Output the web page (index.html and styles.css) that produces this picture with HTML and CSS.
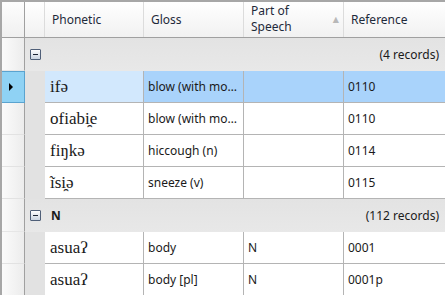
FILE: index.html
```html
<!DOCTYPE html>
<html lang="en">
<head>
  <meta charset="UTF-8">
  <title>Lexicon grid</title>
  <link rel="stylesheet" href="styles.css">
</head>
<body>
  <div class="grid">
    <!-- Column headers -->
    <div class="head">
      <div class="rh"></div>
      <div class="indent"></div>
      <div class="hcell c-phon">Phonetic</div>
      <div class="hcell c-gloss">Gloss</div>
      <div class="hcell c-pos"><span class="two-line">Part of<br>Speech</span><span class="sort">▲</span></div>
      <div class="hcell c-ref">Reference</div>
    </div>

    <!-- Group: empty part of speech -->
    <div class="group">
      <div class="rh"></div>
      <div class="group-body">
        <span class="toggle"></span>
        <span class="group-name"></span>
        <span class="count">(4 records)</span>
      </div>
    </div>
    <div class="row selected">
      <div class="rh"><span class="pointer"></span></div>
      <div class="indent"></div>
      <div class="cell c-phon phon">ifə</div>
      <div class="cell c-gloss">blow (with mo…</div>
      <div class="cell c-pos"></div>
      <div class="cell c-ref">0110</div>
    </div>
    <div class="row">
      <div class="rh"></div>
      <div class="indent"></div>
      <div class="cell c-phon phon">ofiabi̯e</div>
      <div class="cell c-gloss">blow (with mo…</div>
      <div class="cell c-pos"></div>
      <div class="cell c-ref">0110</div>
    </div>
    <div class="row">
      <div class="rh"></div>
      <div class="indent"></div>
      <div class="cell c-phon phon">fiŋkə</div>
      <div class="cell c-gloss">hiccough (n)</div>
      <div class="cell c-pos"></div>
      <div class="cell c-ref">0114</div>
    </div>
    <div class="row">
      <div class="rh"></div>
      <div class="indent"></div>
      <div class="cell c-phon phon">ĩsi̯ə</div>
      <div class="cell c-gloss">sneeze (v)</div>
      <div class="cell c-pos"></div>
      <div class="cell c-ref">0115</div>
    </div>

    <!-- Group: N -->
    <div class="group">
      <div class="rh"></div>
      <div class="group-body">
        <span class="toggle"></span>
        <span class="group-name">N</span>
        <span class="count">(112 records)</span>
      </div>
    </div>
    <div class="row">
      <div class="rh"></div>
      <div class="indent"></div>
      <div class="cell c-phon phon">asuaʔ</div>
      <div class="cell c-gloss">body</div>
      <div class="cell c-pos">N</div>
      <div class="cell c-ref">0001</div>
    </div>
    <div class="row">
      <div class="rh"></div>
      <div class="indent"></div>
      <div class="cell c-phon phon">asuaʔ</div>
      <div class="cell c-gloss">body [pl]</div>
      <div class="cell c-pos">N</div>
      <div class="cell c-ref">0001p</div>
    </div>
  </div>
</body>
</html>
```

FILE: styles.css
```css
/* Base */
body {
  margin: 0;
  font-family: "Noto Sans", "DejaVu Sans", sans-serif;
  font-size: 12px;
  color: #1a1a1a;
  background: #fff;
}

.grid {
  width: 445px;
  height: 295px;
  box-sizing: border-box;
  border-top: 2px solid #a7a7a7;
  border-left: 2px solid #a7a7a7;
  overflow: hidden;
}

/* Row header column (left strip) */
.rh {
  width: 23px;
  flex: none;
  box-sizing: border-box;
  border-right: 1px solid #a0a0a0;
  border-bottom: 1px solid #e2e2e2;
  background: linear-gradient(to right, #fbfbfb, #ececec);
  position: relative;
}

.indent {
  width: 20px;
  flex: none;
  background: #e2e2e2;
}

/* Header */
.head {
  display: flex;
  height: 35px;
  border-bottom: 1px solid #a0a0a0;
  background: linear-gradient(#ffffff, #f1f1f1);
}

.head .rh {
  border-bottom: none;
  background: linear-gradient(#fdfdfd, #f0f0f0);
}

.head .indent {
  background: linear-gradient(#ffffff, #f1f1f1);
  border-right: 1px solid #dcdcdc;
  box-sizing: border-box;
}

.hcell {
  display: flex;
  align-items: center;
  justify-content: space-between;
  padding-left: 7px;
  box-sizing: border-box;
  border-right: 1px solid #dcdcdc;
  color: #1e2a3a;
}

.two-line {
  line-height: 16px;
  margin-top: -1px;
}

.hcell.c-pos {
  padding-right: 4px;
}

.sort {
  font-size: 8px;
  line-height: 8px;
  color: #b8b8b8;
  align-self: flex-start;
  margin-top: 13px;
}

/* Column widths */
.c-phon { width: 99px; flex: none; }
.c-gloss { width: 100px; flex: none; }
.c-pos { width: 100px; flex: none; }
.c-ref { flex: 1; border-right: none; }

/* Group rows */
.group {
  display: flex;
  height: 33px;
}

.group .rh {
  border-bottom-color: #e6e6e6;
}

.group-body {
  flex: 1;
  display: flex;
  align-items: center;
  padding: 0 6px 0 5px;
  background: linear-gradient(#e3e3e3, #e8e8e8);
}

.toggle {
  width: 9px;
  height: 9px;
  border: 1px solid #4f5f78;
  border-radius: 1px;
  background: linear-gradient(#fdfdfe, #c9d3e0);
  position: relative;
  flex: none;
}

.toggle::after {
  content: "";
  position: absolute;
  left: 2px;
  top: 4px;
  width: 5px;
  height: 1px;
  background: #1c2434;
}

.group-name {
  margin-left: 10px;
  font-weight: bold;
}

.count {
  margin-left: auto;
}

/* Data rows */
.row {
  display: flex;
  height: 32px;
}

.cell {
  padding: 0 4px;
  box-sizing: border-box;
  border-right: 1px solid #b4b4b4;
  border-bottom: 1px solid #b4b4b4;
  white-space: nowrap;
  overflow: hidden;
  line-height: 31px;
}

.cell.c-ref {
  border-right: none;
}

.phon {
  font-family: "Liberation Serif", "DejaVu Serif", serif;
  font-size: 17px;
  padding-left: 5px;
}

/* Selected row */
.selected .rh {
  background: #8fd2f4;
  border: 1px solid #5aa3cf;
  border-left: none;
}

.pointer {
  position: absolute;
  left: 7px;
  top: 11px;
  width: 0;
  height: 0;
  border-top: 4px solid transparent;
  border-bottom: 4px solid transparent;
  border-left: 4px solid #000;
}

.selected .cell {
  background: #a9d3fb;
}

.selected .cell.c-phon {
  background: #d2e8fd;
}
```
